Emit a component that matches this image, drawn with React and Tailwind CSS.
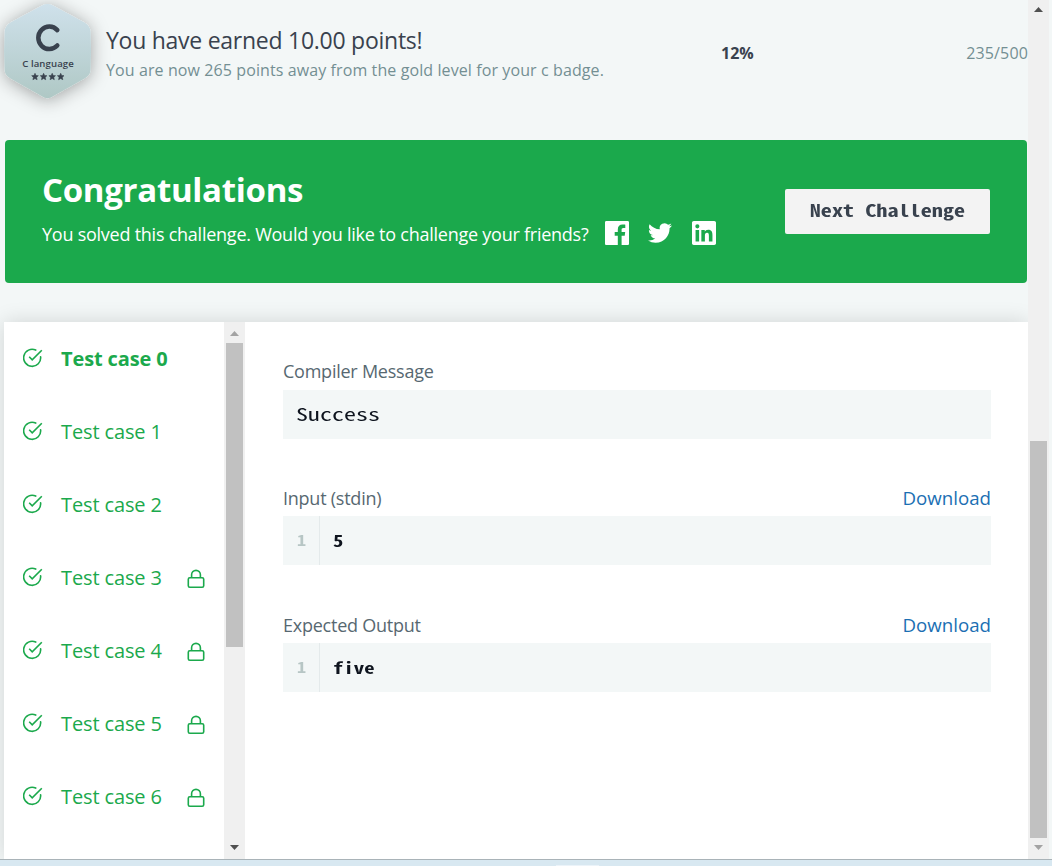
import React from "react";

const SANS = "font-['Open_Sans',sans-serif]";
const MONO = "font-['Noto_Sans_Mono_CJK_SC','Noto_Sans_Mono','DejaVu_Sans_Mono',monospace]";

const CASES = [0, 1, 2, 3, 4, 5, 6];

function CheckIcon() {
  return (
    <svg width="20" height="20" viewBox="0 0 20 20" fill="none" stroke="#1ba94c" strokeWidth="1.6" className="relative -top-px shrink-0">
      <path d="M12.700 2.100A8.500 8.500 0 1 0 17.600 8.900" strokeLinecap="round" />
      <path d="M6.200 8.800l3 3L18.800 2.200" />
    </svg>
  );
}

function LockIcon() {
  return (
    <svg width="18" height="20" viewBox="0 0 18 20" fill="none" stroke="#1ba94c" strokeWidth="1.6" className="shrink-0">
      <rect x="1.300" y="8.700" width="15.400" height="9.600" rx="1.500" />
      <path d="M4.600 8.700V5.800a4.400 4.400 0 0 1 8.800 0v2.900" />
    </svg>
  );
}

function Arrow({ up, color }) {
  return (
    <svg width="9" height="5" viewBox="0 0 9 5" fill={color} className="shrink-0">
      <path d={up ? "M4.5 0L9 5H0z" : "M4.5 5L9 0H0z"} />
    </svg>
  );
}

function Badge() {
  return (
    <svg width="160" height="160" viewBox="-34 -30 160 160" className="absolute -left-[34px] -top-[30px]">
      <defs>
        <linearGradient id="badge" x1="0" y1="0" x2="0" y2="1">
          <stop offset="0" stopColor="#cfe1eb" />
          <stop offset="1" stopColor="#afc8c5" />
        </linearGradient>
        <filter id="glow" x="-40%" y="-40%" width="180%" height="180%">
          <feDropShadow dx="0" dy="2" stdDeviation="9" floodColor="#000" floodOpacity="0.35" />
        </filter>
      </defs>
      <path
        filter="url(#glow)"
        fill="url(#badge)"
        d="M42.500 5.300Q47.500 2.700 52.500 5.300L84.500 22.500Q90 25.600 90.500 31.500Q91.500 51 90.500 70Q90 75.500 84.500 78.500L53 96.300Q47.500 100 42 96.300L10.500 78.500Q5 75.500 4.700 70Q3.500 51 4.700 31.500Q5 25.600 10.500 22.500Z"
      />
      <path d="M57.300 30.100A11 11.200 0 1 0 57.300 45.500" fill="none" stroke="#39424e" strokeWidth="4.500" strokeLinecap="round" />
      {[35, 43.600, 52.200, 60.700].map((x) => (
        <path
          key={x}
          transform={`translate(${x} 76.800)`}
          fill="#39424e"
          stroke="#39424e"
          strokeWidth="0.600"
          strokeLinejoin="round"
          d="M0 -3.500L1 -1.300L3.300 -1.100L1.600 0.500L2.100 2.900L0 1.700L-2.100 2.900L-1.600 0.500L-3.300 -1.100L-1 -1.300Z"
        />
      ))}
    </svg>
  );
}

function CodeBlock({ title, value }) {
  return (
    <section className="h-[127px]">
      <div className="flex h-9 items-center justify-between">
        <h3 className="text-[18px] tracking-[-0.240px] whitespace-nowrap text-[#576871]">{title}</h3>
        <a className="text-[18.700px] whitespace-nowrap text-[#1b6fb3]">Download</a>
      </div>
      <div className={`${MONO} flex h-[49px] items-center bg-[#f3f7f7] font-bold`}>
        <span className="flex h-full w-[37px] items-center justify-center border-r border-[#e4eaeb] text-[14px] text-[#b7c6c5]">
          <span className="inline-block scale-x-[1.300]">1</span>
        </span>
        <span className="ml-[13px] inline-block origin-left scale-x-[1.340] text-[15.500px] text-[#0e141e]">{value}</span>
      </div>
    </section>
  );
}

export default function App() {
  return (
    <div className={`${SANS} flex h-[866px] w-[1052px] flex-col overflow-hidden bg-[#f3f7f7]`}>
      <div className="flex h-[859px] shrink-0">
        <main className="flex w-[1028px] shrink-0 flex-col overflow-hidden">
          <header className="flex h-[140px] shrink-0 items-start">
            <div className="relative h-[105px] w-[106px] shrink-0">
              <Badge />
              <span className="absolute left-0 top-[57px] w-[96px] text-center text-[9.600px] leading-[13px] font-semibold tracking-[0.100px] text-[#39424e]">C language</span>
            </div>
            <div className="w-[615px] pt-[24px]">
              <h1 className="text-[23px] leading-[32px] tracking-[-0.260px] whitespace-nowrap text-[#39424e]">You have earned 10.00 points!</h1>
              <p className="mt-[3px] text-[16px] leading-[22px] tracking-[0.100px] whitespace-nowrap text-[#738f93]">You are now 265 points away from the gold level for your c badge.</p>
            </div>
            <div className="flex flex-1 justify-between pt-[42px] text-[16px] leading-[22px]">
              <span className="font-bold text-[#39424e]">12%</span>
              <span className="tracking-[0.150px] text-[#738f93]">235/500</span>
            </div>
          </header>

          <section className="ml-[5px] flex h-[143px] w-[1022px] shrink-0 items-center justify-between rounded-[4px] bg-[#1ba94c] pr-[37px] pl-[37px] text-white">
            <div>
              <h2 className="text-[33px] leading-[44px] font-bold tracking-[-0.300px] whitespace-nowrap">Congratulations</h2>
              <div className="flex h-[44px] items-center">
                <span className="w-[563px] pt-[1px] text-[18px] tracking-[-0.245px] whitespace-nowrap">You solved this challenge. Would you like to challenge your friends?</span>
                <span className="flex items-center gap-[18px] pb-[2px]">
                  <svg width="24" height="24" viewBox="0 0 24 24" fill="#fff">
                    <path d="M22.700 0H1.300C.6 0 0 .6 0 1.300v21.400C0 23.400.6 24 1.300 24h11.500v-9.300H9.700v-3.600h3.100V8.400c0-3.100 1.900-4.800 4.700-4.800 1.300 0 2.500.1 2.800.1V7h-1.900c-1.500 0-1.800.7-1.800 1.800v2.300h3.600l-.5 3.600h-3.100V24h6.100c.7 0 1.300-.6 1.300-1.300V1.300C24 .6 23.400 0 22.700 0z" />
                  </svg>
                  <svg width="27" height="24" viewBox="-0.500 0 26 24" fill="#fff">
                    <path d="M23.950 4.570a10 10 0 0 1-2.820.77 4.960 4.960 0 0 0 2.160-2.720c-.95.550-2 .950-3.130 1.180a4.920 4.920 0 0 0-8.380 4.480C7.690 8.100 4.070 6.130 1.640 3.160a4.820 4.820 0 0 0-.67 2.480c0 1.710.87 3.210 2.190 4.100a4.900 4.900 0 0 1-2.230-.620v.060a4.920 4.920 0 0 0 3.950 4.830 5 5 0 0 1-2.210.080 4.940 4.940 0 0 0 4.600 3.420A9.870 9.870 0 0 1 0 19.540a13.990 13.990 0 0 0 7.550 2.210c9.050 0 14-7.500 14-13.980 0-.210 0-.420-.020-.630a9.940 9.940 0 0 0 2.460-2.550z" />
                  </svg>
                  <svg width="24" height="24" viewBox="0 0 24 24" fill="#fff">
                    <path d="M20.450 20.450h-3.560v-5.570c0-1.330-.020-3.040-1.850-3.040-1.850 0-2.140 1.450-2.140 2.940v5.670H9.350V9h3.410v1.560h.050c.480-.9 1.640-1.850 3.370-1.850 3.600 0 4.270 2.370 4.270 5.460v6.280zM5.340 7.430a2.060 2.060 0 1 1 0-4.130 2.060 2.060 0 0 1 0 4.130zM7.120 20.450H3.560V9h3.560v11.450zM22.230 0H1.770C.79 0 0 .77 0 1.730v20.540C0 23.230.79 24 1.770 24h20.450c.98 0 1.780-.77 1.780-1.730V1.730C24 .77 23.200 0 22.230 0z" />
                  </svg>
                </span>
              </div>
            </div>
            <button className={`${MONO} h-[45px] w-[205px] rounded-[2px] bg-[#f3f3f3] pb-[2px] text-[16.700px] font-bold whitespace-nowrap text-[#39424e]`}>
              <span className="inline-block scale-x-[1.330]">Next Challenge</span>
            </button>
          </section>

          <div className="mt-[39px] ml-[4px] flex h-[537px] w-[1024px] shrink-0 bg-white shadow-[0_0_20px_rgba(0,0,0,0.14)]">
            <ul className="w-[220px] shrink-0">
              {CASES.map((n) => (
                <li key={n} className={`flex h-[73px] items-center pl-[19px] text-[20px] tracking-[-0.120px] text-[#1ba94c] ${n === 0 ? "font-bold" : ""}`}>
                  <CheckIcon />
                  <span className="w-[126px] pt-[1px] pl-[18px] whitespace-nowrap">Test case {n}</span>
                  {n > 2 && (
                    <span className="pl-[18px] pt-[2px]">
                      <LockIcon />
                    </span>
                  )}
                </li>
              ))}
            </ul>
            <div className="flex w-[21px] shrink-0 flex-col items-center bg-[#f0f0f0] pt-[9px] pb-[9px]">
              <Arrow up color="#a3a3a3" />
              <div className="mt-[7px] h-[304px] w-[17px] bg-[#c1c1c1]" />
              <div className="flex-1" />
              <Arrow color="#505050" />
            </div>
            <div className="flex-1 pt-[32px] pr-[37px] pl-[38px]">
              <section className="h-[126px]">
                <div className="flex h-9 items-center pb-[2px]">
                  <h3 className="text-[18px] tracking-[-0.240px] text-[#576871]">Compiler Message</h3>
                </div>
                <div className={`${MONO} flex h-[49px] items-center bg-[#f3f7f7] pb-[2px] pl-[12.500px] text-[17.900px] text-[#0e141e]`}>
                  <span className="inline-block origin-left scale-x-[1.340]">Success</span>
                </div>
              </section>
              <CodeBlock title="Input (stdin)" value="5" />
              <CodeBlock title="Expected Output" value="five" />
            </div>
          </div>
        </main>

        <div className="flex w-[21px] shrink-0 flex-col items-center bg-[#f0f0f0] pt-[7px] pb-[9px]">
          <Arrow up color="#505050" />
          <div className="mt-[429px] h-[397px] w-[17px] shrink-0 bg-[#c1c1c1]" />
          <div className="flex-1" />
          <Arrow color="#a3a3a3" />
        </div>
      </div>
      <footer className="flex h-[7px] shrink-0 border-t border-[#a9b3b8] bg-[#d8e8f1] pt-[5px] pl-[556px]">
        <div className="h-[1px] w-[43px] bg-[#ebf3f9]" />
      </footer>
    </div>
  );
}
